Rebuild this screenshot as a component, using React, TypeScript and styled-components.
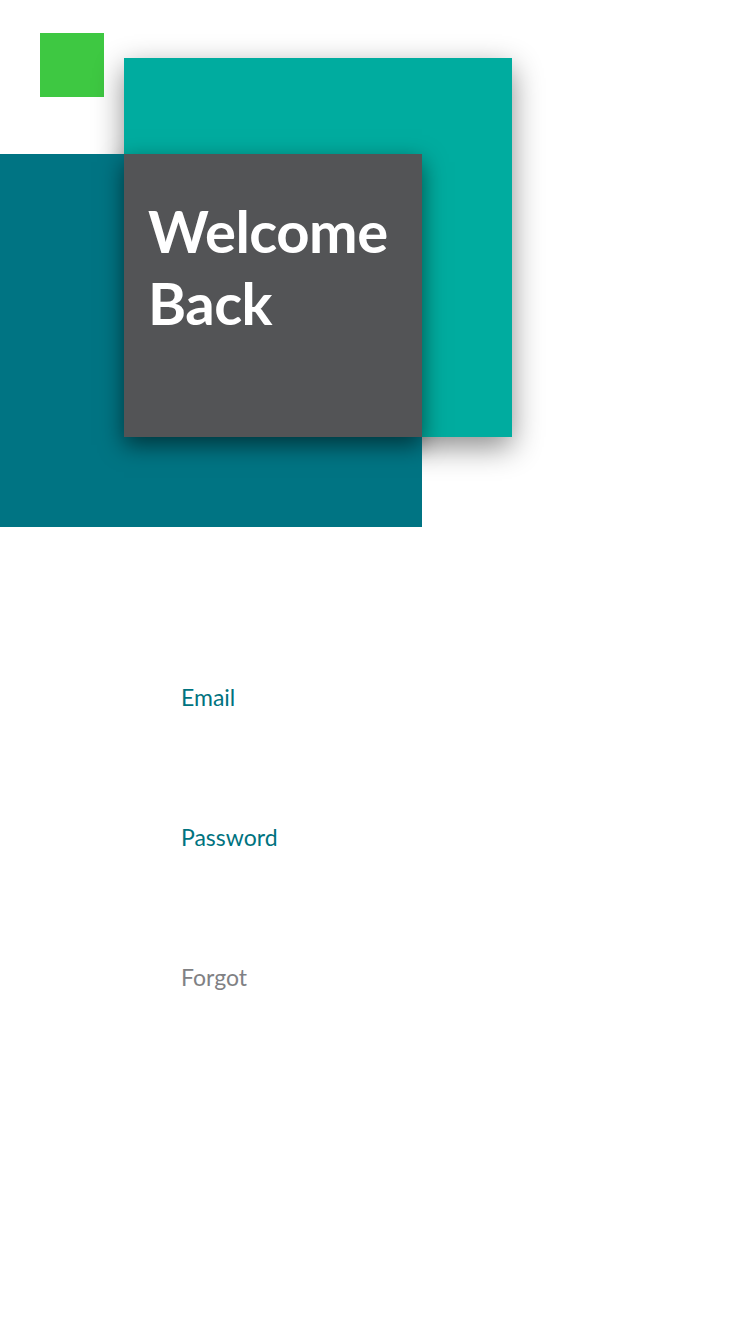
import React from 'react';
import styled, { createGlobalStyle } from 'styled-components';

const GlobalStyle = createGlobalStyle`
  html, body {
    margin: 0;
    padding: 0;
    background: #ffffff;
  }
  body {
    font-family: Lato, "Open Sans", "Liberation Sans", sans-serif;
  }
`;

const Page = styled.div`
  width: 751px;
  min-height: 1334px;
  background: #ffffff;
  overflow: hidden;
`;

// Stacked squares of the hero, overlapped on one grid
const Hero = styled.div`
  display: grid;
  grid-template-columns: 40px 64px 20px 298px 90px;
  grid-template-rows: 33px 25px 39px 57px 283px 90px;
`;

const Tile = styled.div<{
  $col: string;
  $row: string;
  $bg: string;
  $z: number;
  $shadow?: string;
}>`
  grid-column: ${({ $col }) => $col};
  grid-row: ${({ $row }) => $row};
  background: ${({ $bg }) => $bg};
  z-index: ${({ $z }) => $z};
  box-shadow: ${({ $shadow }) => $shadow || 'none'};
`;

const TitleCard = styled(Tile)`
  padding: 41px 0 0 24px;
`;

const Title = styled.h1`
  margin: 0;
  color: #ffffff;
  font-family: Lato, "Open Sans", sans-serif;
  font-weight: 700;
  font-size: 58px;
  line-height: 72px;
  letter-spacing: -0.5px;
`;

const Form = styled.form`
  display: flex;
  flex-direction: column;
  gap: 110px;
  padding: 155px 0 0 181px;
`;

const Label = styled.label<{ $muted?: boolean }>`
  display: block;
  font-family: Lato, "Open Sans", sans-serif;
  font-size: 23px;
  line-height: 30px;
  color: ${({ $muted }) => ($muted ? '#808184' : '#00737f')};
`;

export default function App() {
  return (
    <Page>
      <GlobalStyle />
      <Hero>
        {/* small green accent */}
        <Tile $col="2 / 3" $row="2 / 4" $bg="#3ec842" $z={1} />
        {/* light teal square */}
        <Tile
          $col="4 / 6"
          $row="3 / 6"
          $bg="#00ac9f"
          $z={2}
          $shadow="0 10px 28px rgba(0, 0, 0, 0.45)"
        />
        {/* dark teal square */}
        <Tile $col="1 / 5" $row="5 / 7" $bg="#007483" $z={3} />
        {/* grey title card */}
        <TitleCard
          $col="4 / 5"
          $row="5 / 6"
          $bg="#535456"
          $z={4}
          $shadow="0 8px 22px rgba(0, 0, 0, 0.55)"
        >
          <Title>
            Welcome
            <br />
            Back
          </Title>
        </TitleCard>
      </Hero>
      <Form>
        <Label>Email</Label>
        <Label>Password</Label>
        <Label $muted>Forgot</Label>
      </Form>
    </Page>
  );
}
